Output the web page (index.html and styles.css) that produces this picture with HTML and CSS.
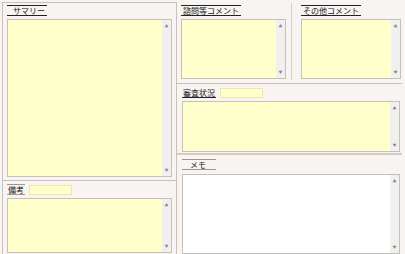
FILE: index.html
```html
<!DOCTYPE html>
<html>
<head>
    <title>Memo Form</title>
    <link rel="stylesheet" href="styles.css">
</head>
<body>
    <div class="page">
        <div class="left">
            <div class="sec sec-summary">
                <div class="label-row"><span class="label">サマリー</span></div>
                <div class="area area-summary">
                    <div class="area-body"></div>
                    <div class="scroll"><span>▲</span><span>▼</span></div>
                </div>
            </div>
            <div class="sec sec-biko">
                <div class="label-row"><span class="label label-gray label-tight">備考</span><span class="mini-input"></span></div>
                <div class="area area-biko">
                    <div class="area-body"></div>
                    <div class="scroll"><span>▲</span><span>▼</span></div>
                </div>
            </div>
        </div>
        <div class="right">
            <div class="top-row">
                <div class="col col-first">
                    <div class="label-row"><span class="label">諮問等コメント</span></div>
                    <div class="area area-top">
                        <div class="area-body"></div>
                        <div class="scroll"><span>▲</span><span>▼</span></div>
                    </div>
                </div>
                <div class="col col-second">
                    <div class="label-row"><span class="label">その他コメント</span></div>
                    <div class="area area-top">
                        <div class="area-body"></div>
                        <div class="scroll"><span>▲</span><span>▼</span></div>
                    </div>
                </div>
            </div>
            <div class="sec sec-status">
                <div class="label-row"><span class="label label-under label-tight">審査状況</span><span class="mini-input"></span></div>
                <div class="area area-status">
                    <div class="area-body"></div>
                    <div class="scroll"><span>▲</span><span>▼</span></div>
                </div>
            </div>
            <div class="sec sec-memo">
                <div class="label-row"><span class="label label-gray">メモ</span></div>
                <div class="area area-memo">
                    <div class="area-body"></div>
                    <div class="scroll"><span>▲</span><span>▼</span></div>
                </div>
            </div>
        </div>
    </div>
</body>
</html>
```

FILE: styles.css
```css
body, html {
    margin: 0;
    height: 100%;
    background-color: #f7f4f1;
    font-family: "Noto Sans CJK JP", "DejaVu Sans", sans-serif;
    font-size: 8px;
    color: #222;
}

.page {
    display: flex;
    height: 254px;
    width: 405px;
    overflow: hidden;
}

/* left column */
.left {
    width: 173px;
    margin: 2px 0 0 2px;
    border-left: 1px solid #c8c1b9;
    border-top: 1px solid #c8c1b9;
    border-right: 1px solid #c8c1b9;
    display: flex;
    flex-direction: column;
}

.sec-summary {
    padding: 2px 4px 0 4px;
    height: 175px;
    border-bottom: 1px solid #c8c1b9;
}

.sec-biko {
    padding: 3px 4px 0 4px;
    flex: 1;
}

.label-row {
    display: flex;
    align-items: center;
    height: 11px;
    margin-bottom: 3px;
}

.label {
    display: inline-block;
    height: 9px;
    line-height: 9px;
    padding: 0 2px;
    border-top: 1px solid #222;
    border-bottom: 1px solid #222;
    white-space: nowrap;
}

.sec-summary .label {
    width: 32px;
    padding-left: 6px;
}

.label-gray {
    border-top-color: #9c9894;
    border-bottom-color: #9c9894;
}

.label-under {
    border-top-color: transparent;
}

.label-tight {
    padding: 0 1px;
}

.mini-input {
    display: inline-block;
    width: 41px;
    height: 8px;
    margin-left: 4px;
    background-color: #ffffcc;
    border: 1px solid #f0e6a8;
}

.area {
    display: flex;
    background-color: #ffffcc;
    border: 1px solid #c4c0bc;
}

.area-body {
    flex: 1;
}

.scroll {
    width: 9px;
    background-color: #f1f0ee;
    display: flex;
    flex-direction: column;
    justify-content: space-between;
    align-items: center;
    font-size: 4px;
    line-height: 6px;
    color: #888;
    padding: 3px 0;
}

.area-summary {
    height: 156px;
}

.area-biko {
    height: 53px;
}

/* right column */
.right {
    flex: 1;
    display: flex;
    flex-direction: column;
    margin-right: 3px;
}

.top-row {
    display: flex;
    height: 80px;
    border-bottom: 1px solid #c8c1b9;
    padding-top: 3px;
}

.col {
    padding: 2px 0 0 0;
}

.col-first {
    width: 105px;
    padding-left: 4px;
    margin-right: 5px;
}

.col-second {
    flex: 1;
    border-left: 1px solid #d6d0ca;
    margin-bottom: 3px;
    padding-left: 9px;
    padding-right: 1px;
}

.area-top {
    height: 58px;
}

.sec-status {
    padding: 3px 2px 0 5px;
    height: 66px;
    border-bottom: 2px solid #d2ccc5;
}

.area-status {
    height: 49px;
}

.sec-memo {
    flex: 1;
    padding: 4px 2px 0 5px;
}

.sec-memo .label-row {
    margin-bottom: 4px;
}

.sec-memo .label {
    padding: 0 10px 0 8px;
}

.area-memo {
    background-color: #ffffff;
    height: 78px;
}
```
